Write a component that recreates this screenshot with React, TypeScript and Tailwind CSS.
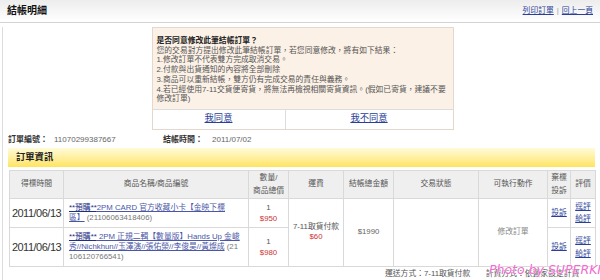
import React from "react";

const link = "text-[#2b3f98] underline";

function HeadCell({ children, className = "" }: { children: React.ReactNode; className?: string }) {
  return (
    <th className={`border border-[#d9d9d9] bg-[#efefef] font-normal text-[#555] text-center align-middle p-0 ${className}`}>
      {children}
    </th>
  );
}

export default function App() {
  return (
    <div className="relative w-[600px] h-[280px] overflow-hidden bg-white font-['Liberation_Sans','Noto_Sans_CJK_TC',sans-serif] text-[#555]">
      {/* header */}
      <div className="h-[23px] flex items-center justify-between pl-[7px] pr-[7px] border-b border-[#d2d2d2] bg-gradient-to-b from-[#ededed] to-white">
        <div className="text-[10px] font-bold text-[#111] leading-none">結帳明細</div>
        <div className="text-[7.8px] leading-none flex items-center gap-[3px]">
          <span className={link}>列印訂單</span>
          <span className="text-[#999]">|</span>
          <span className={link}>回上一頁</span>
        </div>
      </div>

      <div className="ml-[2px] border-l border-[#dcdcdc] h-[257px] pl-[5px] pr-[3px]">
        {/* notice box */}
        <div className="mt-[4px] mx-auto w-[302px] border border-[#e2d8ce] bg-[#fcf1e6]">
          <div className="pt-[8px] pb-[5px] px-[4px] text-[7.8px] leading-[9.7px] whitespace-nowrap">
            <div className="font-bold text-[#222]">是否同意修改此筆結帳訂單？</div>
            <div>您的交易對方提出修改此筆結帳訂單，若您同意修改，將有如下結果：</div>
            <div>1.修改訂單不代表雙方完成取消交易。</div>
            <div>2.付款與出貨通知的內容將全部刪除</div>
            <div>3.商品可以重新結帳，雙方仍有完成交易的責任與義務。</div>
            <div>4.若已經使用7-11交貨便寄貨，將無法再檢視相關寄貨資訊。(假如已寄貨，建議不要</div>
            <div>修改訂單)</div>
          </div>
          <div className="grid grid-cols-[133px_1fr] h-[20px] bg-white border-t border-[#dcdcdc] text-[9.3px]">
            <div className="flex items-center justify-center border-r border-[#dcdcdc]">
              <span className={link}>我同意</span>
            </div>
            <div className="flex items-center justify-center">
              <span className={link}>我不同意</span>
            </div>
          </div>
        </div>

        {/* order info */}
        <div className="mt-[5px] h-[10px] flex items-center text-[8px] leading-[10px] whitespace-nowrap">
          <span className="font-bold text-[#333] w-[46px]">訂單編號：</span>
          <span className="text-[#666] w-[109px]">11070299387667</span>
          <span className="font-bold text-[#333] w-[49px]">結帳時間：</span>
          <span className="text-[#666]">2011/07/02</span>
        </div>

        {/* yellow bar */}
        <div className="mt-[3px] w-[587px] h-[19px] flex items-center pl-[8px] bg-gradient-to-b from-[#fffbd8] to-[#ffe45c]">
          <span className="text-[9.3px] font-bold text-[#222] leading-none">訂單資訊</span>
        </div>

        {/* table */}
        <table className="mt-[3px] ml-[1px] w-[586px] table-fixed border-collapse text-[7.8px] leading-[10px]">
          <colgroup>
            <col className="w-[54px]" />
            <col className="w-[185px]" />
            <col className="w-[40px]" />
            <col className="w-[55px]" />
            <col className="w-[50px]" />
            <col className="w-[85px]" />
            <col className="w-[69px]" />
            <col className="w-[23px]" />
            <col className="w-[25px]" />
          </colgroup>
          <thead>
            <tr className="h-[28px]">
              <HeadCell>得標時間</HeadCell>
              <HeadCell>商品名稱/商品編號</HeadCell>
              <HeadCell className="leading-[13px]">
                數量/
                <br />
                商品總價
              </HeadCell>
              <HeadCell>運費</HeadCell>
              <HeadCell>結帳總金額</HeadCell>
              <HeadCell>交易狀態</HeadCell>
              <HeadCell>可執行動作</HeadCell>
              <HeadCell className="leading-[13px]">
                棄標
                <br />
                投訴
              </HeadCell>
              <HeadCell>評價</HeadCell>
            </tr>
          </thead>
          <tbody>
            <tr className="h-[29px]">
              <td className="border border-[#d9d9d9] p-0 text-center text-[11px] tracking-[-0.5px] text-[#333]">2011/06/13</td>
              <td className="border border-[#d9d9d9] p-0 pl-[5px] whitespace-nowrap">
                <div>
                  <span className="text-[#1f2f84] underline">**預購**</span>
                  <span className="text-[#4a56a6] underline">2PM CARD 官方收藏小卡【金映下標</span>
                </div>
                <div>
                  <span className="text-[#4a56a6] underline">區】</span>
                  <span className="text-[#777]"> (21106063418406)</span>
                </div>
              </td>
              <td className="border border-[#d9d9d9] p-0 text-center leading-[11px]">
                <div className="text-[#555]">1</div>
                <div className="text-[#cc3333]">$950</div>
              </td>
              <td rowSpan={2} className="border border-[#d9d9d9] p-0 text-center whitespace-nowrap">
                <div className="text-[#555]">7-11取貨付款</div>
                <div className="text-[#cc3333]">$60</div>
              </td>
              <td rowSpan={2} className="border border-[#d9d9d9] p-0 text-center text-[#666]">$1990</td>
              <td rowSpan={2} className="border border-[#d9d9d9] p-0"></td>
              <td rowSpan={2} className="border border-[#d9d9d9] p-0 text-center text-[#888]">修改訂單</td>
              <td className="border border-[#d9d9d9] p-0 text-center">
                <span className={link}>投訴</span>
              </td>
              <td className="border border-[#d9d9d9] p-0 text-center leading-[12px]">
                <div className={link}>逕評</div>
                <div className={link}>給評</div>
              </td>
            </tr>
            <tr className="h-[39px]">
              <td className="border border-[#d9d9d9] p-0 text-center text-[11px] tracking-[-0.5px] text-[#333]">2011/06/13</td>
              <td className="border border-[#d9d9d9] p-0 pl-[5px] whitespace-nowrap">
                <div>
                  <span className="text-[#1f2f84] underline">**預購**</span>
                  <span className="text-[#4a56a6] underline"> 2PM 正規二輯【數量版】Hands Up 金峻</span>
                </div>
                <div>
                  <span className="text-[#4a56a6] underline">秀//Nichkhun//玉澤演//張佑榮//李俊昊//黃燦成</span>
                  <span className="text-[#777]"> (21</span>
                </div>
                <div className="text-[#777]">106120766541)</div>
              </td>
              <td className="border border-[#d9d9d9] p-0 text-center leading-[11px]">
                <div className="text-[#555]">1</div>
                <div className="text-[#cc3333]">$980</div>
              </td>
              <td className="border border-[#d9d9d9] p-0 text-center">
                <span className={link}>投訴</span>
              </td>
              <td className="border border-[#d9d9d9] p-0 text-center leading-[13px]">
                <div className={link}>逕評</div>
                <div className={link}>給評</div>
              </td>
            </tr>
          </tbody>
        </table>

        {/* bottom */}
        <div className="mt-[2px] pl-[377px] text-[7.8px] leading-[10px] whitespace-nowrap text-[#555]">
          運送方式：7-11取貨付款　　計費方式：依賣家設定計費
        </div>
      </div>

      {/* watermark */}
      <div className="absolute left-[489px] top-[263px] whitespace-nowrap italic text-[12.5px] leading-[14px] text-[#f06ccf] font-['DejaVu_Sans',sans-serif] [text-shadow:0_0_1px_#fff,0_0_1px_#fff]">
        Photo by SUPERKIMI
      </div>
    </div>
  );
}
